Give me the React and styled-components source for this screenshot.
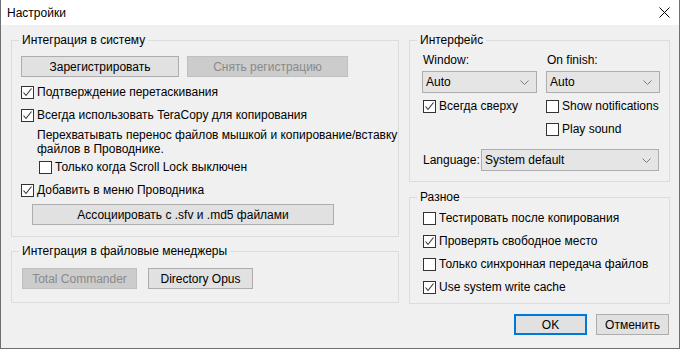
import React from 'react';
import styled, { createGlobalStyle } from 'styled-components';

const GlobalStyle = createGlobalStyle`
  html, body { margin: 0; padding: 0; background: #f0f0f0; }
  body {
    font-family: "Segoe UI", "Liberation Sans", Arial, sans-serif;
    font-size: 12px;
    color: #000;
  }
`;

const Window = styled.div`
  width: 680px;
  height: 349px;
  box-sizing: border-box;
  border: 1px solid #6f6f6f;
  border-top: none;
  background: #f0f0f0;
  display: flex;
  flex-direction: column;
`;

const TitleBar = styled.div`
  height: 25px;
  background: #fff;
  display: flex;
  align-items: center;
  justify-content: space-between;
  padding-left: 6px;
  flex-shrink: 0;
`;

const Title = styled.span`
  line-height: 16px;
`;

const CloseIcon = styled.svg`
  width: 11px;
  height: 11px;
  margin-right: 9px;
`;

const Body = styled.div`
  padding: 15px 9px 0 10px;
  display: flex;
  flex-direction: column;
`;

const Columns = styled.div`
  display: flex;
  gap: 10px;
`;

const Column = styled.div`
  width: ${p => p.$w}px;
  display: flex;
  flex-direction: column;
`;

const GroupBox = styled.div`
  position: relative;
  border: 1px solid #dcdcdc;
  padding: ${p => p.$pad};
  margin-top: ${p => p.$top || 0}px;
  display: flex;
  flex-direction: column;
`;

const Legend = styled.span`
  position: absolute;
  top: -8px;
  left: 7px;
  padding: 0 3px;
  background: #f0f0f0;
  line-height: 15px;
`;

const Row = styled.div`
  display: flex;
  align-items: center;
  gap: ${p => p.$gap || 0}px;
  margin-top: ${p => p.$top || 0}px;
  margin-left: ${p => p.$left || 0}px;
`;

const Button = styled.button`
  width: ${p => p.$w}px;
  height: 21px;
  box-sizing: border-box;
  margin: 0;
  padding: 0;
  font: inherit;
  color: #000;
  background: #e1e1e1;
  border: ${p => (p.$primary ? '2px solid #0078d7' : '1px solid #adadad')};
  &:disabled {
    background: #cccccc;
    border-color: #bfbfbf;
    color: #8a8a8a;
  }
`;

const CheckLabel = styled.label`
  display: flex;
  align-items: center;
  height: 16px;
  margin-top: ${p => p.$top || 0}px;
  margin-left: ${p => p.$left || 0}px;
  line-height: 16px;
  white-space: nowrap;
`;

const Box = styled.span`
  width: 13px;
  height: 13px;
  box-sizing: border-box;
  border: 1px solid #333;
  background: #fff;
  margin-right: 3px;
  display: flex;
  align-items: center;
  justify-content: center;
  flex-shrink: 0;
`;

const Hint = styled.p`
  margin: ${p => p.$top || 0}px 0 0 16px;
  line-height: 14px;
  white-space: nowrap;
`;

const FieldLabel = styled.div`
  line-height: 14px;
  padding-left: 1px;
  width: ${p => (p.$w ? `${p.$w}px` : 'auto')};
  flex-shrink: 0;
`;

const Pair = styled.div`
  display: grid;
  grid-template-columns: 115px 114px;
  column-gap: 9px;
  margin-top: ${p => p.$top || 0}px;
`;

const SelectBox = styled.div`
  width: ${p => p.$w}px;
  height: 22px;
  box-sizing: border-box;
  background: #e5e5e5;
  border: 1px solid #adadad;
  display: flex;
  align-items: center;
  justify-content: space-between;
  padding: 0 7px 0 3px;
`;

const Footer = styled.div`
  display: flex;
  justify-content: flex-end;
  gap: 9px;
  margin-top: 10px;
  padding-right: 1px;
`;

const CheckMark = () => (
  <svg width="11" height="11" viewBox="0 0 11 11">
    <polyline points="1.5,5.5 4,8.5 9.5,1.5" fill="none" stroke="#333" strokeWidth="1.1" />
  </svg>
);

const Check = ({ checked, children, top, left }) => (
  <CheckLabel $top={top} $left={left}>
    <Box>{checked && <CheckMark />}</Box>
    {children}
  </CheckLabel>
);

const Select = ({ value, w }) => (
  <SelectBox $w={w}>
    <span>{value}</span>
    <svg width="9" height="5" viewBox="0 0 9 5">
      <polyline points="0.5,0.5 4.5,4.5 8.5,0.5" fill="none" stroke="#7a7a7a" strokeWidth="1" />
    </svg>
  </SelectBox>
);

const App = () => (
  <>
    <GlobalStyle />
    <Window>
      <TitleBar>
        <Title>Настройки</Title>
        <CloseIcon viewBox="0 0 11 11">
          <path d="M0.5 0.5 L10.5 10.5 M10.5 0.5 L0.5 10.5" stroke="#000" strokeWidth="1" />
        </CloseIcon>
      </TitleBar>
      <Body>
        <Columns>
          <Column $w={388}>
            <GroupBox $pad="15px 9px 11px">
              <Legend>Интеграция в систему</Legend>
              <Row $gap={8}>
                <Button $w={158}>Зарегистрировать</Button>
                <Button $w={161} disabled>Снять регистрацию</Button>
              </Row>
              <Check checked top={7}>Подтверждение перетаскивания</Check>
              <Check checked top={7}>Всегда использовать TeraCopy для копирования</Check>
              <Hint $top={5}>
                Перехватывать перенос файлов мышкой и копирование/вставку
                <br />
                файлов в Проводнике.
              </Hint>
              <Check top={3} left={18}>Только когда Scroll Lock выключен</Check>
              <Check checked top={7}>Добавить в меню Проводника</Check>
              <Row $top={6} $left={11}>
                <Button $w={302}>Ассоциировать с .sfv и .md5 файлами</Button>
              </Row>
            </GroupBox>
            <GroupBox $pad="16px 9px 13px" $top={14}>
              <Legend>Интеграция в файловые менеджеры</Legend>
              <Row $gap={11} $left={1}>
                <Button $w={115} disabled>Total Commander</Button>
                <Button $w={105}>Directory Opus</Button>
              </Row>
            </GroupBox>
          </Column>
          <Column $w={261}>
            <GroupBox $pad="12px 0 10px 12px">
              <Legend>Интерфейс</Legend>
              <Pair>
                <FieldLabel>Window:</FieldLabel>
                <FieldLabel>On finish:</FieldLabel>
              </Pair>
              <Pair $top={4}>
                <Select value="Auto" w={115} />
                <Select value="Auto" w={114} />
              </Pair>
              <Pair $top={5}>
                <Check checked left={1}>Всегда сверху</Check>
                <Check>Show notifications</Check>
              </Pair>
              <Pair $top={7}>
                <span />
                <Check>Play sound</Check>
              </Pair>
              <Row $top={12}>
                <FieldLabel $w={58}>Language:</FieldLabel>
                <Select value="System default" w={178} />
              </Row>
            </GroupBox>
            <GroupBox $pad="12px 0 8px 13px" $top={15}>
              <Legend>Разное</Legend>
              <Check>Тестировать после копирования</Check>
              <Check checked top={7}>Проверять свободное место</Check>
              <Check top={7}>Только синхронная передача файлов</Check>
              <Check checked top={7}>Use system write cache</Check>
            </GroupBox>
          </Column>
        </Columns>
        <Footer>
          <Button $w={73} $primary>OK</Button>
          <Button $w={73}>Отменить</Button>
        </Footer>
      </Body>
    </Window>
  </>
);

export default App;
